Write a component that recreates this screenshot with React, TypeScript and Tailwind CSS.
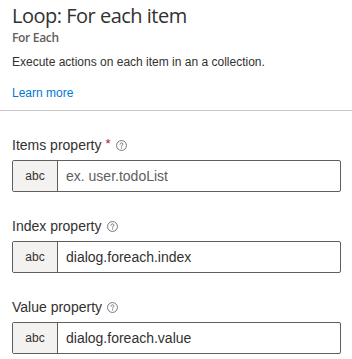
import React from "react";

const font = { fontFamily: '"Liberation Sans", Arial, sans-serif' };
const titleFont = { fontFamily: '"Open Sans", "Liberation Sans", sans-serif' };

function Help() {
  return (
    <svg width="11" height="11" viewBox="0 0 12 12" className="ml-[5px]" fill="none">
      <circle cx="6" cy="6" r="5.4" stroke="#605e5c" strokeWidth="0.9" />
      <path d="M4.4 4.6 C4.4 3.6 5.2 3.1 6 3.1 C6.9 3.1 7.6 3.7 7.6 4.5 C7.6 5.5 6.1 5.6 6.1 6.8" stroke="#605e5c" strokeWidth="0.9" strokeLinecap="round" />
      <circle cx="6.1" cy="8.6" r="0.6" fill="#605e5c" />
    </svg>
  );
}

function Field({ label, required, value, placeholder }: { label: string; required?: boolean; value?: string; placeholder?: string }) {
  return (
    <div className="flex flex-col">
      <div className="flex items-center h-[20px] text-[14px] text-[#323130]">
        <span>{label}</span>
        {required && <span className="text-[#a4262c] ml-[4px] text-[13px] -mt-[3px]">*</span>}
        <Help />
      </div>
      <div className="mt-[5px] flex h-[32px] border border-[#605e5c] rounded-[2px] overflow-hidden">
        <div className="w-[45px] flex items-center justify-center bg-[#f3f2f1] border-r border-[#605e5c] text-[12px] text-[#323130]">abc</div>
        <div className={"flex-1 flex items-center px-[8px] text-[14px] " + (value ? "text-[#323130]" : "text-[#605e5c]")}>{value ?? placeholder}</div>
      </div>
    </div>
  );
}

export default function App() {
  return (
    <div className="w-[352px] h-[359px] bg-white overflow-hidden" style={font}>
      <div className="px-[12px] pt-[2px] pb-[9px]">
        <div className="text-[20px] leading-[28px] font-medium tracking-[-0.5px] text-[#323130]" style={titleFont}>Loop: For each item</div>
        <div className="text-[12px] leading-[16px] font-semibold tracking-[-0.3px] text-[#605e5c]" style={titleFont}>For Each</div>
        <div className="mt-[8px] text-[12px] leading-[16px] text-[#323130]">Execute actions on each item in an a collection.</div>
        <div className="mt-[15px] text-[12px] leading-[16px] text-[#0078d4]">Learn more</div>
      </div>
      <div className="h-px bg-[#c8c6c4]" />
      <div className="pl-[12px] pr-[11px] pt-[24px] flex flex-col gap-[24px]">
        <Field label="Items property" required placeholder="ex. user.todoList" />
        <Field label="Index property" value="dialog.foreach.index" />
        <Field label="Value property" value="dialog.foreach.value" />
      </div>
    </div>
  );
}
